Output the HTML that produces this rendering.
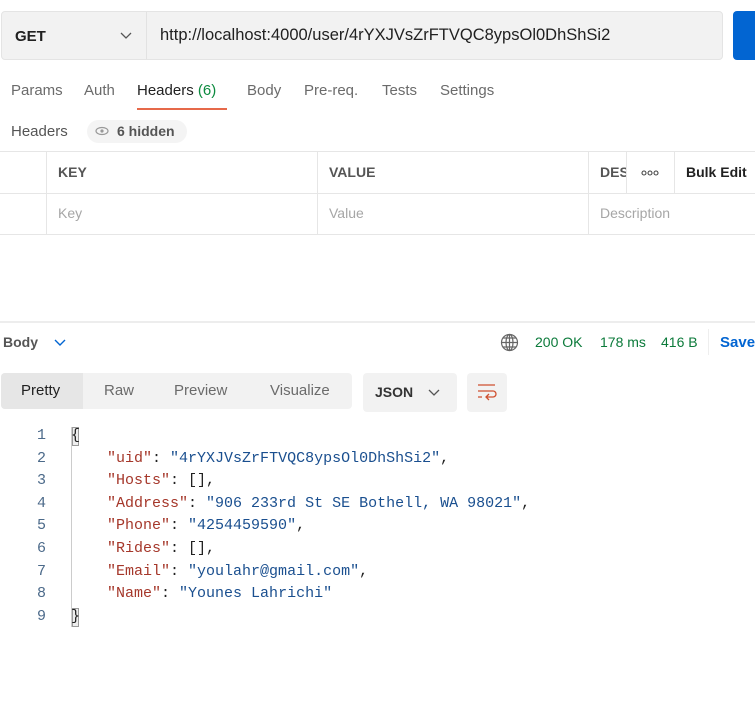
<!DOCTYPE html>
<html><head><style>
*{box-sizing:border-box;margin:0;padding:0}
body{width:755px;height:701px;background:#fff;font-family:"Liberation Sans",sans-serif;position:relative;overflow:hidden;color:#212121}
.a{position:absolute;white-space:nowrap}
.mono{font-family:"Liberation Mono",monospace;font-size:15px}
.k{color:#a5372a}.s{color:#1a4f8f}.p{color:#212121}
.ln{color:#4c6a8a;font-family:"Liberation Mono",monospace;font-size:15px}
</style></head><body>
<div class="a" style="left:1px;top:11px;width:722px;height:49px;background:#f2f2f2;border:1px solid #e4e4e4;border-radius:4px"></div>
<div class="a" style="left:146px;top:12px;width:1px;height:47px;background:#e2e2e2"></div>
<div class="a" style="left:15px;top:28px;font-size:15px;font-weight:bold;color:#212121">GET</div>
<svg class="a" style="left:120px;top:31px" width="12" height="10"><path d="M1 2 L6 7 L11 2" stroke="#555" stroke-width="1.3" fill="none"/></svg>
<div class="a" style="left:160px;top:26px;font-size:16.5px;color:#212121">http://localhost:4000/user/4rYXJVsZrFTVQC8ypsOl0DhShSi2</div>
<div class="a" style="left:733px;top:11px;width:30px;height:49px;background:#0265d2;border-radius:4px"></div>

<div class="a" style="top:82px;left:11px;font-size:15px;color:#6b6b6b">Params</div>
<div class="a" style="top:82px;left:84px;font-size:15px;color:#6b6b6b">Auth</div>
<div class="a" style="top:82px;left:137px;font-size:15px;color:#212121">Headers <span style="color:#0b8a3e">(6)</span></div>
<div class="a" style="top:82px;left:247px;font-size:15px;color:#6b6b6b">Body</div>
<div class="a" style="top:82px;left:304px;font-size:15px;color:#6b6b6b">Pre-req.</div>
<div class="a" style="top:82px;left:382px;font-size:15px;color:#6b6b6b">Tests</div>
<div class="a" style="top:82px;left:440px;font-size:15px;color:#6b6b6b">Settings</div>
<div class="a" style="left:137px;top:108px;width:90px;height:2px;background:#e6694a"></div>

<div class="a" style="top:123px;left:11px;font-size:15px;color:#555">Headers</div>
<div class="a" style="left:87px;top:120px;width:100px;height:23px;background:#f4f4f4;border-radius:12px"></div>
<svg class="a" style="left:95px;top:126px" width="14" height="10"><ellipse cx="7" cy="5" rx="6" ry="3.5" stroke="#999" stroke-width="1.2" fill="none"/><circle cx="7" cy="5" r="1.6" fill="#999"/></svg>
<div class="a" style="top:123px;left:117px;font-size:14px;font-weight:bold;color:#555">6 hidden</div>

<div class="a" style="left:0;top:151px;width:755px;height:1px;background:#e6e6e6"></div>
<div class="a" style="left:0;top:193px;width:755px;height:1px;background:#e6e6e6"></div>
<div class="a" style="left:0;top:234px;width:755px;height:1px;background:#e6e6e6"></div>
<div class="a" style="left:46px;top:151px;width:1px;height:83px;background:#e6e6e6"></div>
<div class="a" style="left:317px;top:151px;width:1px;height:83px;background:#e6e6e6"></div>
<div class="a" style="left:588px;top:151px;width:1px;height:83px;background:#e6e6e6"></div>
<div class="a" style="left:626px;top:151px;width:1px;height:42px;background:#e6e6e6"></div>
<div class="a" style="left:674px;top:151px;width:1px;height:42px;background:#e6e6e6"></div>
<div class="a" style="top:164px;left:58px;font-size:14px;font-weight:bold;color:#555">KEY</div>
<div class="a" style="top:164px;left:329px;font-size:14px;font-weight:bold;color:#555">VALUE</div>
<div class="a" style="top:164px;left:600px;width:26px;overflow:hidden;font-size:14px;font-weight:bold;color:#555">DESC</div>
<svg class="a" style="left:641px;top:170px" width="18" height="6" fill="none" stroke="#444" stroke-width="1.1"><circle cx="3" cy="3" r="2"/><circle cx="9" cy="3" r="2"/><circle cx="15" cy="3" r="2"/></svg>
<div class="a" style="top:164px;left:686px;font-size:14px;font-weight:bold;color:#212121">Bulk Edit</div>
<div class="a" style="top:205px;left:58px;font-size:14px;color:#a6a6a6">Key</div>
<div class="a" style="top:205px;left:329px;font-size:14px;color:#a6a6a6">Value</div>
<div class="a" style="top:205px;left:600px;font-size:14px;color:#a6a6a6">Description</div>

<div class="a" style="left:0;top:321px;width:755px;height:2px;background:#ededed"></div>
<div class="a" style="top:334px;left:3px;font-size:14px;font-weight:bold;color:#555">Body</div>
<svg class="a" style="left:54px;top:338px" width="12" height="9"><path d="M1 2 L6 7 L11 2" stroke="#0265d2" stroke-width="1.4" fill="none"/></svg>
<svg class="a" style="left:500px;top:333px" width="19" height="19" fill="none" stroke="#666" stroke-width="1.2"><circle cx="9.5" cy="9.5" r="8"/><ellipse cx="9.5" cy="9.5" rx="3.5" ry="8"/><path d="M1.5 9.5h16M9.5 1.5v16M3 5h13M3 14h13"/></svg>
<div class="a" style="top:334px;left:535px;font-size:14px;color:#0b7a3a">200 OK</div>
<div class="a" style="top:334px;left:600px;font-size:14px;color:#0b7a3a">178 ms</div>
<div class="a" style="top:334px;left:661px;font-size:14px;color:#0b7a3a">416 B</div>
<div class="a" style="left:708px;top:329px;width:1px;height:26px;background:#eee"></div>
<div class="a" style="top:334px;left:720px;font-size:15px;font-weight:bold;color:#0265d2">Save</div>

<div class="a" style="left:1px;top:373px;width:351px;height:36px;background:#f2f2f2;border-radius:4px"></div>
<div class="a" style="left:1px;top:373px;width:82px;height:36px;background:#e6e6e6;border-radius:4px 0 0 4px"></div>
<div class="a" style="top:382px;left:21px;font-size:15px;color:#212121">Pretty</div>
<div class="a" style="top:382px;left:104px;font-size:15px;color:#6b6b6b">Raw</div>
<div class="a" style="top:382px;left:174px;font-size:15px;color:#6b6b6b">Preview</div>
<div class="a" style="top:382px;left:270px;font-size:15px;color:#6b6b6b">Visualize</div>
<div class="a" style="left:363px;top:373px;width:94px;height:39px;background:#f2f2f2;border-radius:4px"></div>
<div class="a" style="top:384px;left:375px;font-size:14px;font-weight:bold;color:#333">JSON</div>
<svg class="a" style="left:428px;top:388px" width="12" height="9"><path d="M1 2 L6 7 L11 2" stroke="#555" stroke-width="1.3" fill="none"/></svg>
<div class="a" style="left:467px;top:373px;width:40px;height:39px;background:#f2f2f2;border-radius:4px"></div>
<svg class="a" style="left:477px;top:383px" width="20" height="18" fill="none" stroke="#d0502f" stroke-width="1.3"><path d="M1 2h17M1 8h15a3 3 0 0 1 0 6h-6M12 11l-3 3 3 3M1 14h4"/></svg>

<div class="a" style="left:71px;top:427px;width:1px;height:200px;background:#ccc"></div>
<div class="a" style="left:72px;top:427px;width:7px;height:19px;border:1px solid #999;background:#eee"></div>
<div class="a" style="left:72px;top:608px;width:7px;height:19px;border:1px solid #999;background:#eee"></div>
<div class="a" style="left:0;top:425px;line-height:22.6px">
<div class="ln" style="position:absolute;left:36px;top:0;text-align:right;width:10px">1<br>2<br>3<br>4<br>5<br>6<br>7<br>8<br>9</div>
<div class="mono" style="position:absolute;left:71px;top:0;line-height:22.6px;white-space:pre"><span class="p">{</span>
    <span class="k">"uid"</span>: <span class="s">"4rYXJVsZrFTVQC8ypsOl0DhShSi2"</span>,
    <span class="k">"Hosts"</span>: [],
    <span class="k">"Address"</span>: <span class="s">"906 233rd St SE Bothell, WA 98021"</span>,
    <span class="k">"Phone"</span>: <span class="s">"4254459590"</span>,
    <span class="k">"Rides"</span>: [],
    <span class="k">"Email"</span>: <span class="s">"youlahr@gmail.com"</span>,
    <span class="k">"Name"</span>: <span class="s">"Younes Lahrichi"</span>
<span class="p">}</span></div>
</div>
</body></html>
